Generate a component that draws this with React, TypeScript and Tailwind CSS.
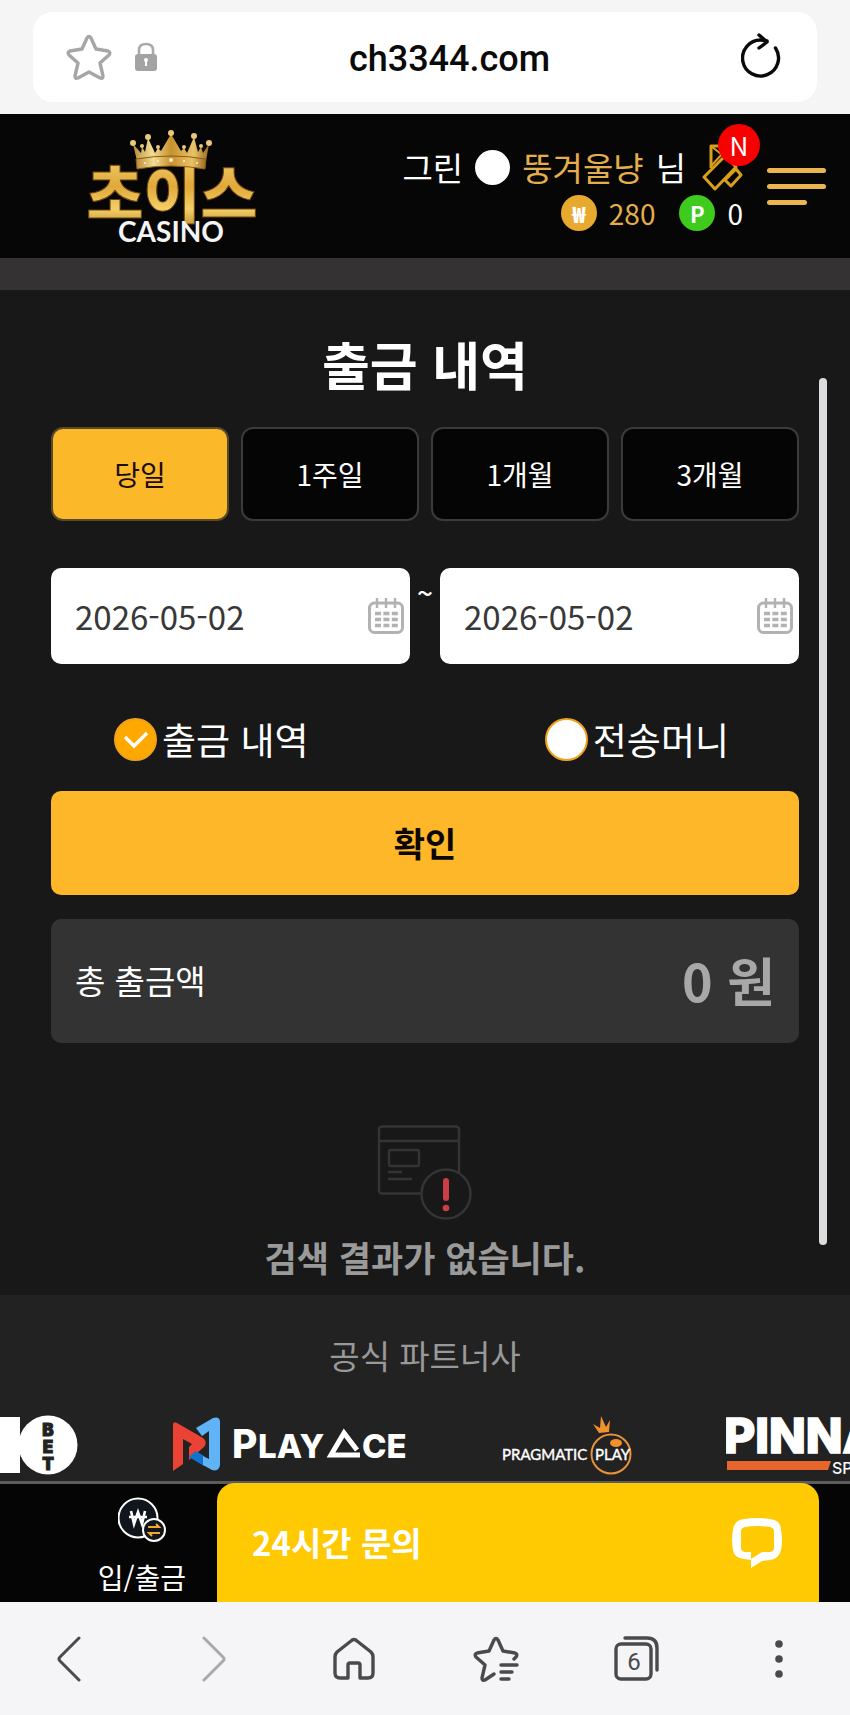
import React, { useState } from "react";

const periods = ["당일", "1주일", "1개월", "3개월"];

const Logo = () => (
  <svg width="176" height="124" viewBox="0 -4 176 124" className="shrink-0">
    <defs>
      <linearGradient id="gold" x1="0" y1="0" x2="0" y2="1">
        <stop offset="0" stopColor="#f6d976" />
        <stop offset="0.45" stopColor="#e0a93a" />
        <stop offset="0.7" stopColor="#f3cf66" />
        <stop offset="1" stopColor="#a8741c" />
      </linearGradient>
      <linearGradient id="crown" x1="0" y1="0" x2="1" y2="0">
        <stop offset="0" stopColor="#b98b3a" />
        <stop offset="0.25" stopColor="#f3dc92" />
        <stop offset="0.5" stopColor="#c8912f" />
        <stop offset="0.8" stopColor="#e9c367" />
        <stop offset="1" stopColor="#9a6a1e" />
      </linearGradient>
    </defs>
    <text
      x="88"
      y="90"
      textAnchor="middle"
      fontSize="62"
      fontWeight="900"
      fill="url(#gold)"
      stroke="#6b4312"
      strokeWidth="1"
    >
      초이스
    </text>
    <path
      d="M53 33 L49 16 L57 25 L58 19 L61 24 L64 10 L71 25 L74 20 L77 23 L87 6 L97 23 L100 20 L103 25 L110 9 L114 24 L117 19 L119 25 L125 16 L122 33 Z"
      fill="url(#crown)"
    />
    <path d="M52 31 Q87 25 122 31 L121 41 Q87 35 53 41 Z" fill="url(#crown)" stroke="#8a5c17" />
    <g fill="#e8c87a">
      <circle cx="49" cy="15" r="3" />
      <circle cx="58" cy="18" r="2" />
      <circle cx="64" cy="9" r="3" />
      <circle cx="74" cy="19" r="2" />
      <circle cx="87" cy="5" r="3" />
      <circle cx="100" cy="19" r="2" />
      <circle cx="110" cy="8" r="3" />
      <circle cx="117" cy="18" r="2" />
      <circle cx="125" cy="15" r="3" />
    </g>
    <g fill="#fff1c0">
      <circle cx="61" cy="35" r="1" />
      <circle cx="74" cy="33" r="1" />
      <circle cx="87" cy="32" r="2" />
      <circle cx="100" cy="33" r="1" />
      <circle cx="113" cy="35" r="1" />
    </g>
    <text
      x="87"
      y="114"
      textAnchor="middle"
      fontSize="28"
      fontWeight="700"
      fill="#f4f4f4"
      className="font-[Lato,sans-serif]"
    >
      CASINO
    </text>
  </svg>
);

const CouponIcon = () => (
  <svg width="41" height="47" viewBox="0 0 41 47" fill="none" stroke="#d9a01c" strokeWidth="3" strokeLinejoin="round">
    <path d="M9 24 V2 H20 L32 16" />
    <path d="M9 22 L22 8 M9 2 L24 14" strokeWidth="2" />
    <path d="M2 33 L23 12 L34 23 L13 45 Z" />
    <path d="M23 36 L34 25 L39 31 L29 42 Z" />
  </svg>
);

const CalendarIcon = () => (
  <svg width="36" height="36" viewBox="0 0 36 36" fill="none" stroke="#b3b1b1">
    <rect x="1.5" y="5" width="33" height="29.5" rx="5" strokeWidth="3" />
    <path d="M9 0 V10 M18 0 V10 M27 0 V10" strokeWidth="2.4" />
    <path d="M7 15.5 H30 M7 21.5 H30 M7 27.5 H30" strokeWidth="3.6" strokeDasharray="6 2.4" />
  </svg>
);

const EmptyIcon = () => (
  <svg width="96" height="96" viewBox="0 0 96 96" fill="none" stroke="#343434" strokeWidth="2.4">
    <rect x="2" y="1.5" width="80" height="67" rx="3" />
    <path d="M1 16 H82" />
    <rect x="12" y="25" width="30" height="16" rx="2" />
    <path d="M11 47 H25 M11 54 H35" />
    <circle cx="69" cy="69" r="24.5" fill="#181818" />
    <path d="M69 56 V73" stroke="#c93f45" strokeWidth="6" strokeLinecap="round" />
    <circle cx="69" cy="83" r="3.3" fill="#c93f45" stroke="none" />
  </svg>
);

const BetLogo = () => (
  <svg width="78" height="60" viewBox="0 0 78 60" className="shrink-0">
    <rect x="0" y="2" width="20" height="56" fill="#fff" />
    <circle cx="48" cy="30" r="29.5" fill="#fff" />
    <g fill="#222" stroke="#222" textAnchor="middle" fontSize="17" fontWeight="900" className="font-[Inter,sans-serif]">
      <text x="48" y="21">B</text>
      <text x="48" y="38">E</text>
      <text x="48" y="55">T</text>
    </g>
  </svg>
);

const PlayAceLogo = () => (
  <svg width="236" height="56" viewBox="0 0 236 56" className="shrink-0">
    <path d="M1 8 Q1 4 5 6 L31 21 Q36 25 32 30 L17 43 L17 30 L20 27 L11 22 V47 L1 54 Z" fill="#ea4335" />
    <path d="M17 40 L32 49 V39 L24 34 Z" fill="#1273cf" />
    <path d="M24 11 L41 1 Q48 -1 48 5 V48 Q47 55 40 53 L31 48 V39 L37 42 V14 L30 19 Z" fill="#61b3f7" />
    <g fill="#fff" fontWeight="800" className="font-[Inter,sans-serif]">
      <text x="60" y="41" fontSize="39">P</text>
      <text x="86" y="41" fontSize="33">LAY</text>
      <text x="190" y="41" fontSize="33">CE</text>
    </g>
    <path d="M188 38 H159 L172 16 L185 33" fill="none" stroke="#fff" strokeWidth="5" />
  </svg>
);

const PragmaticLogo = () => (
  <svg width="130" height="60" viewBox="0 0 130 60" className="shrink-0">
    <circle cx="109" cy="39" r="19.5" fill="none" stroke="#e8923a" strokeWidth="2" />
    <path d="M97 18 L91 9 L98 13 L99 1 L104 12 L108 5 L107 17 Z" fill="#f0912d" />
    <ellipse cx="114" cy="28" rx="6" ry="4" fill="#f0912d" />
    <g fill="#fff" stroke="#fff" strokeWidth="0.4" fontSize="15" className="font-[Lato,sans-serif]">
      <text x="0" y="45">PRAGMATIC</text>
      <text x="93" y="45">PLAY</text>
    </g>
  </svg>
);

const PinnacleLogo = () => (
  <svg width="160" height="60" viewBox="0 0 160 60" className="shrink-0">
    <g fill="#fff" className="font-[Inter,sans-serif]">
      <text x="-2" y="38" fontSize="48" fontWeight="800" stroke="#fff" strokeWidth="1.6">PINNA</text>
      <text x="106" y="59" fontSize="16" fontWeight="500">SP</text>
    </g>
    <path d="M1 46 H105 L102 55 H1 Z" fill="#e8652d" />
  </svg>
);

const DateField = ({ id, label }: { id: string; label: string }) => {
  const [value, setValue] = useState("2026-05-02");

  return (
    <div className="flex h-24 min-w-0 flex-1 items-center rounded-[10px] bg-white pr-[6px] pl-6">
      <label htmlFor={id} className="sr-only" aria-label={label} />
      <input
        id={id}
        type="text"
        value={value}
        onChange={(e) => setValue(e.target.value)}
        className="min-w-0 flex-1 text-[33px] leading-[48px] text-[#383838] outline-none"
      />
      <CalendarIcon />
    </div>
  );
};

const RadioItem = ({ checked, label, onSelect }: { checked: boolean; label: string; onSelect: () => void }) => (
  <label className="flex items-center gap-[5px] text-[37px] leading-11">
    <span className="relative flex">
      <input
        type="radio"
        name="kind"
        checked={checked}
        onChange={onSelect}
        className="size-[43px] appearance-none rounded-full border-2 border-[#f0a21c] bg-white checked:bg-[#ffa800]"
      />
      {checked && (
        <svg
          className="pointer-events-none absolute inset-0"
          width="43"
          height="43"
          viewBox="0 0 43 43"
          fill="none"
          stroke="#fff"
          strokeWidth="3.4"
        >
          <path d="M11 19 L20 28 L33 15" />
        </svg>
      )}
    </span>
    {label}
  </label>
);

const App = () => {
  const [period, setPeriod] = useState("당일");
  const [kind, setKind] = useState("출금 내역");

  return (
    <div lang="ko" className="w-full overflow-hidden bg-[#181818] font-['Noto_Sans_CJK_KR',sans-serif] text-white">
      <div className="bg-[#f5f5f5] px-[33px] py-3">
        <div className="flex h-[90px] items-center rounded-[20px] bg-white pr-9 pl-[33px]">
          <button type="button" aria-label="Bookmark">
            <svg width="46" height="46" viewBox="0 0 46 46" fill="none" stroke="#a6a6a6" strokeWidth="3.4" strokeLinejoin="round">
              <path d="M21 4 Q23 1 25 4 L30 15 L42 17 Q45 18 43 21 L34 29 L37 42 Q37 45 34 44 L23 38 L12 44 Q9 45 9 42 L12 29 L3 21 Q1 18 4 17 L16 15 Z" />
            </svg>
          </button>
          <svg className="ml-[22px]" width="24" height="30" viewBox="0 0 24 30" fill="none">
            <rect x="1" y="12" width="22" height="17" rx="3" fill="#a3a3a3" />
            <path d="M5 13 V8 Q5 2 12 2 Q19 2 19 8 V13" stroke="#a9a9a9" strokeWidth="2.6" />
            <circle cx="12" cy="18" r="2" fill="#fff" />
            <path d="M12 18 V24" stroke="#fff" strokeWidth="2" />
          </svg>
          <input
            aria-label="Address"
            defaultValue="ch3344.com"
            className="min-w-0 flex-1 pt-1 text-center font-[Roboto,sans-serif] text-4xl font-medium text-[#0a0a0a] outline-none"
          />
          <button type="button" aria-label="Reload">
            <svg
              width="40"
              height="48"
              viewBox="0 0 40 48"
              fill="none"
              stroke="#0a0a0a"
              strokeWidth="3.4"
              strokeLinecap="round"
              strokeLinejoin="round"
            >
              <path d="M34.5 15 A18 18 0 1 1 20 7 L26 8" />
              <path d="M18 2 L26 9 L18 15" />
            </svg>
          </button>
        </div>
      </div>

      <header className="flex min-h-36 items-center bg-[#070606] pr-6 pl-[84px]">
        <Logo />
        <div className="ml-auto flex flex-col items-end pt-2">
          <div className="flex h-[46px] items-center gap-3 text-[33px] leading-[46px]">
            <span>그린</span>
            <span className="size-[35px] rounded-full bg-white" />
            <span className="text-[#e5ae4c]">뚱겨울냥</span>
            <span>님</span>
            <a href="#message" aria-label="Message" className="relative ml-1">
              <CouponIcon />
              <span className="absolute -top-5 left-4 flex size-[42px] items-center justify-center rounded-full bg-[#f80000] text-[26px]">
                N
              </span>
            </a>
          </div>
          <div className="flex h-[46px] items-center gap-3 text-[28px]">
            <span className="flex size-9 items-center justify-center rounded-full bg-[#e8a92f] text-[22px] font-black">₩</span>
            <span className="text-[#e5ae4c]">280</span>
            <span className="ml-3 flex size-9 items-center justify-center rounded-full bg-[#3ecb1e] text-[22px] font-bold">P</span>
            <span>0</span>
          </div>
        </div>
        <button type="button" aria-label="Menu" className="ml-6 flex w-[59px] flex-col gap-[11px]">
          <span className="h-[5px] w-full rounded-full bg-[#eab44f]" />
          <span className="h-[5px] w-full rounded-full bg-[#eab44f]" />
          <span className="h-[5px] w-10 rounded-full bg-[#eab44f]" />
        </button>
      </header>
      <div className="h-8 bg-[#343233]" />

      <main className="relative px-[51px] pt-[38px] pb-[14px]">
        <h1 className="text-center text-[52px] leading-[72px] font-bold">출금 내역</h1>

        <div className="mt-[27px] grid grid-cols-4 gap-3">
          {periods.map((item) => (
            <button
              key={item}
              type="button"
              onClick={() => setPeriod(item)}
              className={
                item === period
                  ? "h-[94px] rounded-xl border-2 border-[#594a28] bg-[#fbb829] text-[28px] text-[#1c0c0c]"
                  : "h-[94px] rounded-xl border-2 border-[#3c3b3c] bg-[#060506] text-[28px]"
              }
            >
              {item}
            </button>
          ))}
        </div>

        <div className="mt-[47px] flex">
          <DateField id="from" label="시작일" />
          <span className="w-[30px] text-center text-[28px] leading-[48px] font-medium">~</span>
          <DateField id="to" label="종료일" />
        </div>

        <div className="mt-[53px] flex justify-between pr-[70px] pl-[63px]">
          {["출금 내역", "전송머니"].map((item) => (
            <RadioItem key={item} label={item} checked={kind === item} onSelect={() => setKind(item)} />
          ))}
        </div>

        <button
          type="submit"
          className="mt-[30px] h-[104px] w-full rounded-[10px] bg-[#fdb728] pb-0.5 text-[34px] font-bold text-[#0c0703]"
        >
          확인
        </button>

        <div className="mt-6 flex h-[124px] items-center justify-between rounded-[10px] bg-[#333] px-6">
          <span className="text-[33px]">총 출금액</span>
          <strong className="pb-0.5 text-[52px] leading-[72px] font-bold text-[#a8a8a8]">0 원</strong>
        </div>

        <div className="mt-[82px] flex flex-col items-center gap-3">
          <EmptyIcon />
          <p className="text-[35px] leading-[48px] font-bold text-[#9a9a9a]">검색 결과가 없습니다.</p>
        </div>

        <div className="absolute top-[88px] right-[23px] bottom-[50px] w-2 rounded-full bg-[#dcdbdd]" />
      </main>

      <footer className="bg-[#222] pt-9 pb-1">
        <p className="text-center text-[33px] leading-[48px] text-[#999]">공식 파트너사</p>
        <div className="mt-[34px] flex h-16 items-center gap-[94px] overflow-hidden">
          <BetLogo />
          <PlayAceLogo />
          <PragmaticLogo />
          <PinnacleLogo />
        </div>
      </footer>

      <div className="flex h-[121px] border-t-3 border-[#5c5c5c] bg-[#050505] pr-[31px]">
        <a
          href="#cash"
          className="flex w-[217px] shrink-0 flex-col items-center gap-2 pt-[13px] pl-[67px] text-[28px] leading-[52px]"
        >
          <svg className="shrink-0" width="48" height="46" viewBox="0 0 48 46" fill="none" stroke="#fff" strokeWidth="2">
            <circle cx="20" cy="21" r="19.5" fill="#10161c" />
            <path d="M13 14 L16 27 L20 15 L24 27 L27 14 M11 20 H29" strokeWidth="2.6" />
            <circle cx="36" cy="33" r="11" fill="#10161c" />
            <path d="M30 30 H41 L38 27 M42 36 H31 L34 39" stroke="#f2a92b" />
          </svg>
          입/출금
        </a>
        <button
          type="button"
          className="-mt-px flex flex-1 items-center justify-between rounded-t-[18px] bg-[#ffca02] pr-[37px] pl-[35px] text-[33px] font-bold"
        >
          24시간 문의
          <svg width="50" height="50" viewBox="0 0 50 50">
            <path
              fillRule="evenodd"
              d="M12 1 Q25 -1 38 1 Q49 2 49 12 Q51 22 49 32 Q47 41 38 42 L30 43 L19 50 V42 L12 41 Q2 40 1 32 Q-1 22 1 12 Q2 2 12 1 Z M13 9 Q9 10 9 13 V30 Q9 33 13 34 L19 34 V41 L30 34 L38 34 Q42 33 42 30 V13 Q42 10 38 9 Q25 7 13 9 Z"
              fill="#fff"
            />
          </svg>
        </button>
      </div>

      <nav className="grid h-[113px] grid-cols-6 place-items-center bg-[#f5f4f7] text-[#4a494c]">
        <button type="button" aria-label="Back" className="mr-1">
          <svg
            width="24"
            height="46"
            viewBox="0 0 24 46"
            fill="none"
            stroke="currentColor"
            strokeWidth="3"
            strokeLinecap="round"
            strokeLinejoin="round"
          >
            <path d="M22 2 L3 21 Q1 23 3 25 L22 44" />
          </svg>
        </button>
        <button type="button" aria-label="Forward" className="ml-1 text-[#a9a8ab]">
          <svg
            width="24"
            height="46"
            viewBox="0 0 24 46"
            fill="none"
            stroke="currentColor"
            strokeWidth="3"
            strokeLinecap="round"
            strokeLinejoin="round"
          >
            <path d="M2 2 L21 21 Q23 23 21 25 L2 44" />
          </svg>
        </button>
        <button type="button" aria-label="Home">
          <svg width="42" height="44" viewBox="0 0 42 44" fill="none" stroke="currentColor" strokeWidth="3.4" strokeLinejoin="round">
            <path d="M4 15 L18 4 Q21 1 24 4 L38 15 Q40 17 40 20 V36 Q40 41 35 41 H27 V28 Q27 26 25 26 H17 Q15 26 15 28 V41 H7 Q2 41 2 36 V20 Q2 17 4 15 Z" />
          </svg>
        </button>
        <button type="button" aria-label="Bookmarks">
          <svg
            width="46"
            height="46"
            viewBox="0 0 46 46"
            fill="none"
            stroke="currentColor"
            strokeWidth="3.4"
            strokeLinecap="round"
            strokeLinejoin="round"
          >
            <path d="M41 23 L43 21 Q45 18 42 17 L30 15 L25 4 Q23 1 21 4 L16 15 L4 17 Q1 18 3 21 L12 29 L9 42 Q9 45 12 44 L21 38" />
            <path d="M28 29 H44 M28 36 H39 M28 43 H36" />
          </svg>
        </button>
        <button type="button" aria-label="Tabs" className="relative">
          <svg width="46" height="46" viewBox="0 0 46 46" fill="none" stroke="currentColor" strokeWidth="3.4" strokeLinecap="round">
            <rect x="2" y="8" width="35" height="35" rx="5" />
            <path d="M11 2 H33 Q43 2 43 12 V34" />
          </svg>
          <span className="absolute top-[11px] left-0 w-[39px] text-center font-[Roboto,sans-serif] text-2xl leading-[30px]">
            6
          </span>
        </button>
        <button type="button" aria-label="More">
          <svg width="8" height="38" viewBox="0 0 8 38" fill="currentColor">
            <circle cx="4" cy="4" r="3.8" />
            <circle cx="4" cy="19" r="3.8" />
            <circle cx="4" cy="34" r="3.8" />
          </svg>
        </button>
      </nav>
    </div>
  );
};

export default App;
